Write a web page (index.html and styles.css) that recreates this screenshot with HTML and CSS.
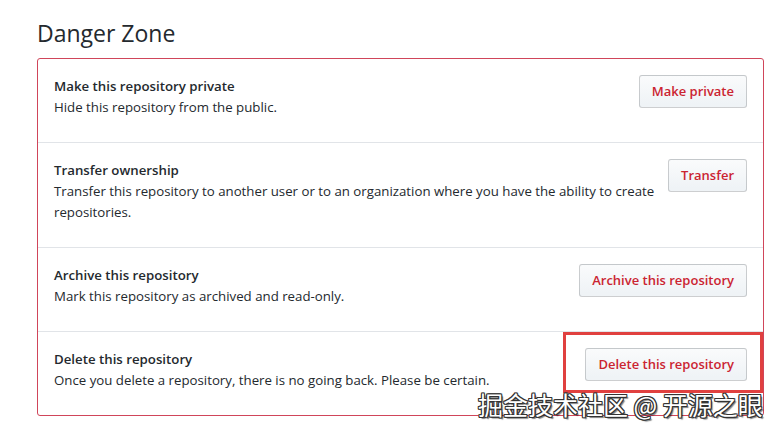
FILE: index.html
```html
<!DOCTYPE html>
<html lang="en">
<head>
<meta charset="utf-8">
<title>Danger Zone</title>
<link rel="stylesheet" href="styles.css">
</head>
<body>
<div class="page">
  <h2 class="subhead">Danger Zone</h2>
  <div class="box">
    <div class="row">
      <div class="info">
        <strong class="title">Make this repository private</strong>
        <p class="desc">Hide this repository from the public.</p>
      </div>
      <button class="btn">Make private</button>
    </div>
    <div class="row">
      <div class="info">
        <strong class="title">Transfer ownership</strong>
        <p class="desc">Transfer this repository to another user or to an organization where you have the ability to create repositories.</p>
      </div>
      <button class="btn">Transfer</button>
    </div>
    <div class="row">
      <div class="info">
        <strong class="title">Archive this repository</strong>
        <p class="desc">Mark this repository as archived and read-only.</p>
      </div>
      <button class="btn">Archive this repository</button>
    </div>
    <div class="row">
      <div class="info">
        <strong class="title">Delete this repository</strong>
        <p class="desc">Once you delete a repository, there is no going back. Please be certain.</p>
      </div>
      <div class="highlight-wrap">
        <button class="btn">Delete this repository</button>
        <span class="highlight"></span>
      </div>
    </div>
  </div>
  <div class="watermark">掘金技术社区 @ 开源之眼</div>
</div>
</body>
</html>
```
FILE: styles.css
```css
* { box-sizing: border-box; }
html, body { margin: 0; padding: 0; background: #fff; }
body {
  font-family: "Open Sans", "Noto Sans", "Liberation Sans", sans-serif;
  color: #24292e;
  font-size: 13.25px;
  line-height: 21px;
}
.page {
  position: relative;
  padding: 15px 15px 0 37px;
  width: 779px;
  height: 431px;
}
.subhead {
  margin: 0 0 7px 0;
  font-size: 23px;
  font-weight: 400;
  line-height: 36px;
  color: #24292e;
}
.box {
  border: 1px solid #d0455a;
  border-radius: 3px;
  width: 727px;
}
.row {
  display: flex;
  align-items: flex-start;
  padding: 16px;
  border-top: 1px solid #e1e4e8;
}
.row:first-child { border-top: 0; }
.info { flex: 1; min-width: 0; padding-top: 1px; }
.title {
  display: block;
  font-weight: 600;
  color: #24292e;
}
.desc {
  margin: 0 0 8px 0;
  color: #24292e;
}
.btn {
  flex: none;
  margin-left: 12px;
  font-family: inherit;
  font-size: 13px;
  font-weight: 600;
  line-height: 19px;
  padding: 6px 12px;
  color: #cb2431;
  background: linear-gradient(#fafbfc, #eff3f6 90%);
  border: 1px solid rgba(27, 31, 35, 0.2);
  border-radius: 3px;
  cursor: pointer;
}
.highlight-wrap {
  position: relative;
  flex: none;
  display: flex;
}
.highlight {
  position: absolute;
  left: -10px;
  top: -16px;
  right: -16px;
  bottom: -12px;
  border: 3px solid #e0403f;
  pointer-events: none;
}
.watermark {
  position: absolute;
  left: 478px;
  top: 389px;
  font-family: "Noto Sans CJK SC", "Liberation Sans", sans-serif;
  font-size: 25px;
  line-height: 30px;
  color: #fff;
  white-space: nowrap;
  text-shadow:
    -1px -1px 0 #333, 1px -1px 0 #333, -1px 1px 0 #333, 1px 1px 0 #333,
    0 -1px 0 #333, 0 1px 0 #333, -1px 0 0 #333, 1px 0 0 #333,
    2px 2px 1px rgba(0,0,0,0.5);
}
```
